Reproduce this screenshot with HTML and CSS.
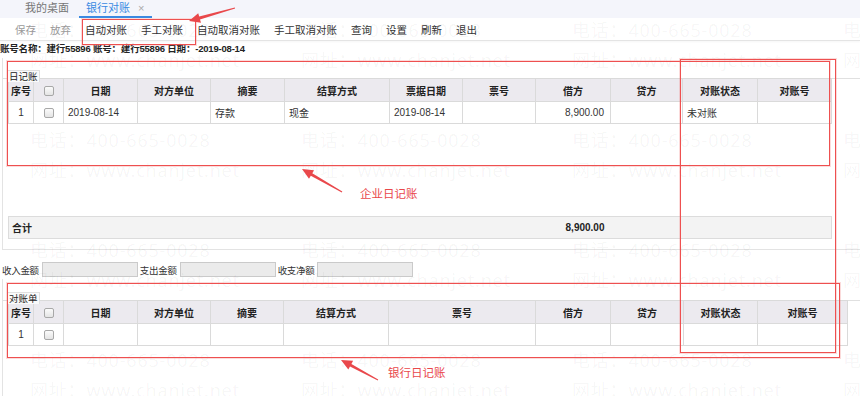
FILE: index.html
```html
<!DOCTYPE html>
<html lang="zh-CN">
<head>
<meta charset="UTF-8">
<title>银行对账</title>
<link rel="stylesheet" href="styles.css">
</head>
<body>
<div class="page">
    <div class="tabs">
        <span class="tab">我的桌面</span>
        <span class="tab active">银行对账<span class="close">×</span></span>
    </div>

    <div class="toolbar">
        <span class="btn disabled">保存</span>
        <span class="btn disabled">放弃</span>
        <span class="btn">自动对账</span>
        <span class="btn">手工对账</span>
        <span class="btn">自动取消对账</span>
        <span class="btn">手工取消对账</span>
        <span class="btn">查询</span>
        <span class="btn">设置</span>
        <span class="btn">刷新</span>
        <span class="btn">退出</span>
    </div>

    <div class="info">账号名称：建行55896 账号：建行55896 日期：-2019-08-14</div>

    <!-- 日记账 -->
    <div class="panel journal">
        <div class="legend"><span>日记账</span></div>
        <table class="grid">
            <colgroup>
                <col style="width:25px"><col style="width:30px"><col style="width:74px"><col style="width:73px">
                <col style="width:74px"><col style="width:105px"><col style="width:73px"><col style="width:73px">
                <col style="width:75px"><col style="width:72px"><col style="width:75px"><col style="width:74px">
            </colgroup>
            <tr>
                <th>序号</th><th><span class="cb"></span></th><th>日期</th><th>对方单位</th>
                <th>摘要</th><th>结算方式</th><th>票据日期</th><th>票号</th>
                <th>借方</th><th>贷方</th><th>对账状态</th><th>对账号</th>
            </tr>
            <tr>
                <td class="c">1</td><td class="c"><span class="cb"></span></td><td>2019-08-14</td><td></td>
                <td>存款</td><td>现金</td><td>2019-08-14</td><td></td>
                <td class="r">8,900.00</td><td></td><td>未对账</td><td></td>
            </tr>
        </table>

        <table class="sum">
            <colgroup>
                <col style="width:25px"><col style="width:30px"><col style="width:74px"><col style="width:73px">
                <col style="width:74px"><col style="width:105px"><col style="width:73px"><col style="width:73px">
                <col style="width:75px"><col style="width:72px"><col style="width:75px"><col style="width:74px">
            </colgroup>
            <tr>
                <td colspan="8">合计</td>
                <td class="r">8,900.00</td>
                <td colspan="3"></td>
            </tr>
        </table>
    </div>

    <div class="totals">
        <label>收入金额</label><span class="field"></span>
        <label>支出金额</label><span class="field"></span>
        <label>收支净额</label><span class="field"></span>
    </div>

    <!-- 对账单 -->
    <div class="panel statement">
        <div class="legend"><span>对账单</span></div>
        <table class="grid">
            <colgroup>
                <col style="width:25px"><col style="width:30px"><col style="width:74px"><col style="width:73px">
                <col style="width:73px"><col style="width:105px"><col style="width:147px"><col style="width:75px">
                <col style="width:73px"><col style="width:74px"><col style="width:90px">
            </colgroup>
            <tr>
                <th>序号</th><th><span class="cb"></span></th><th>日期</th><th>对方单位</th>
                <th>摘要</th><th>结算方式</th><th>票号</th><th>借方</th>
                <th>贷方</th><th>对账状态</th><th>对账号</th>
            </tr>
            <tr>
                <td class="c">1</td><td class="c"><span class="cb"></span></td><td></td><td></td>
                <td></td><td></td><td></td><td></td>
                <td></td><td></td><td></td>
            </tr>
        </table>
    </div>

    <!-- 水印 -->
    <div class="watermark">
        <div class="wm"><div>电话：400-665-0028</div><div>网址：www.chanjet.net</div></div>
        <div class="wm"><div>电话：400-665-0028</div><div>网址：www.chanjet.net</div></div>
        <div class="wm"><div>电话：400-665-0028</div><div>网址：www.chanjet.net</div></div>
        <div class="wm"><div>电话：400-665-0028</div><div>网址：www.chanjet.net</div></div>
        <div class="wm"><div>电话：400-665-0028</div><div>网址：www.chanjet.net</div></div>
        <div class="wm"><div>电话：400-665-0028</div><div>网址：www.chanjet.net</div></div>
        <div class="wm"><div>电话：400-665-0028</div><div>网址：www.chanjet.net</div></div>
        <div class="wm"><div>电话：400-665-0028</div><div>网址：www.chanjet.net</div></div>
        <div class="wm"><div>电话：400-665-0028</div><div>网址：www.chanjet.net</div></div>
        <div class="wm"><div>电话：400-665-0028</div><div>网址：www.chanjet.net</div></div>
        <div class="wm"><div>电话：400-665-0028</div><div>网址：www.chanjet.net</div></div>
        <div class="wm"><div>电话：400-665-0028</div><div>网址：www.chanjet.net</div></div>
        <div class="wm"><div>电话：400-665-0028</div><div>网址：www.chanjet.net</div></div>
        <div class="wm"><div>电话：400-665-0028</div><div>网址：www.chanjet.net</div></div>
        <div class="wm"><div>电话：400-665-0028</div><div>网址：www.chanjet.net</div></div>
        <div class="wm"><div>电话：400-665-0028</div><div>网址：www.chanjet.net</div></div>
    </div>

    <!-- 标注 -->
    <div class="mark mark-toolbar"></div>
    <div class="mark mark-journal"></div>
    <div class="mark mark-status"></div>
    <div class="mark mark-statement"></div>
    <div class="note note-journal">企业日记账</div>
    <div class="note note-bank">银行日记账</div>
    <svg class="arrows" width="860" height="396" viewBox="0 0 860 396">
        <polygon points="235.1,8.5 200,19.4 201,22.8 189,21 198.2,13.2 199.2,16.6 234.9,7.5"/>
        <polygon points="341.8,192.4 310.8,175.8 309,178.8 302,169 314,170.2 312.3,173.2 342.3,191.6"/>
        <polygon points="377.8,380.4 350,366.5 348.3,369.6 341,360 353.1,360.8 351.4,363.9 378.2,379.6"/>
    </svg>
</div>
</body>
</html>
```

FILE: styles.css
```css
body {
    margin: 0;
    background: #fff;
    font-family: "Liberation Sans", "Noto Sans CJK SC", sans-serif;
    color: #222;
}
.page {
    position: relative;
    width: 860px;
    height: 396px;
    overflow: hidden;
}

/* tabs */
.tabs {
    height: 18px;
    background: #f4f5fb;
    display: flex;
    padding-left: 18px;
}
.tab {
    font-size: 11px;
    line-height: 16px;
    color: #777;
    padding: 0 7px;
    margin-right: 3px;
}
.tab.active {
    color: #3a8ae2;
    border-bottom: 2px solid #3a8ae2;
    padding-right: 8px;
}
.close {
    color: #aaa;
    margin-left: 8px;
    font-size: 11px;
}

/* toolbar */
.toolbar {
    height: 22px;
    display: flex;
    align-items: center;
    padding-left: 8px;
    border-bottom: 1px solid #e4e4e4;
    box-shadow: 0 1px 2px rgba(0, 0, 0, 0.04);
}
.btn {
    font-size: 10.5px;
    padding: 0 7px;
    color: #333;
}
.btn.disabled {
    color: #9a9a9a;
}

.info {
    font-size: 9.5px;
    font-weight: bold;
    line-height: 12px;
    padding-top: 2px;
    color: #222;
    letter-spacing: -0.2px;
}

/* panels */
.panel {
    margin-left: 2px;
    border-left: 1px solid #e3e3e3;
    padding-left: 5px;
}
.journal {
    margin-top: 3px;
    padding-top: 8px;
    padding-bottom: 10px;
    border-bottom: 1px solid #e3e3e3;
}
.statement {
    padding-top: 9px;
    height: 120px;
}
.legend {
    height: 12px;
    margin-left: -5px;
    padding-left: 5px;
    border-bottom: 1px solid #e0e0e0;
}
.legend span {
    display: inline-block;
    font-size: 9.5px;
    line-height: 11px;
    padding: 0 1px;
    border: 1px solid #e0e0e0;
    border-bottom: none;
    border-left: none;
    background: #fafafa;
}

table {
    border-collapse: collapse;
    table-layout: fixed;
}
.grid th,
.grid td {
    border: 1px solid #dadada;
    font-size: 10px;
    white-space: nowrap;
    overflow: hidden;
}
.grid th {
    height: 22px;
    background: #eceaef;
    font-weight: bold;
    color: #222;
    text-align: center;
    padding: 0;
}
.grid td {
    height: 21px;
    padding: 0 4px;
    color: #333;
}
.grid td.c {
    text-align: center;
    padding: 0;
}
.r {
    text-align: right;
}
.grid td.r {
    padding-right: 6px;
}
.journal .grid {
    width: 823px;
    margin-top: -1px;
}
.statement .grid {
    width: 839px;
    margin-top: -1px;
}

.cb {
    display: inline-block;
    width: 8px;
    height: 8px;
    border: 1px solid #a8a8a8;
    border-radius: 2px;
    background: linear-gradient(#fbfbfb, #e4e4e4);
    vertical-align: middle;
}

.sum {
    width: 823px;
    margin-top: 92px;
    background: #f3f3f3;
    border: 1px solid #dcdcdc;
}
.sum td {
    height: 21px;
    font-size: 10px;
    font-weight: bold;
    padding: 0 3px;
}
.sum td.r {
    padding-right: 6px;
}

/* totals */
.totals {
    display: flex;
    align-items: center;
    padding: 10px 0 0 2px;
    height: 19px;
}
.totals label {
    font-size: 9.5px;
    color: #333;
    margin-right: 3px;
    letter-spacing: -0.3px;
}
.field {
    width: 94px;
    height: 13px;
    background: #ebebeb;
    border: 1px solid #cacaca;
    margin-right: 2px;
}

/* watermark */
.watermark {
    position: absolute;
    left: 0;
    top: 0;
    width: 1120px;
    padding: 15px 0 0 30px;
    display: grid;
    grid-template-columns: repeat(4, 271px);
    grid-auto-rows: 110px;
    pointer-events: none;
}
.wm div {
    font-family: "Noto Sans", "Noto Sans CJK SC", sans-serif;
    font-size: 18px;
    line-height: 30px;
    letter-spacing: 0.8px;
    color: rgba(0, 0, 0, 0.045);
    white-space: nowrap;
}

/* annotations */
.mark {
    position: absolute;
    border: 1px solid #ee5050;
    box-shadow: 0 0 0 1px rgba(240, 110, 110, 0.25);
}
.mark-toolbar { left: 82px; top: 19px; width: 112px; height: 24px; }
.mark-journal { left: 7px; top: 61px; width: 821px; height: 103px; }
.mark-status { left: 680px; top: 59px; width: 154px; height: 292px; }
.mark-statement { left: 7px; top: 283px; width: 831px; height: 73px; }
.note {
    position: absolute;
    font-family: "Noto Sans CJK SC", sans-serif;
    font-size: 11.5px;
    color: #e9484b;
}
.note-journal { left: 360px; top: 185px; }
.note-bank { left: 388px; top: 364px; }
.arrows {
    position: absolute;
    left: 0;
    top: 0;
    fill: #e9484b;
}
```
